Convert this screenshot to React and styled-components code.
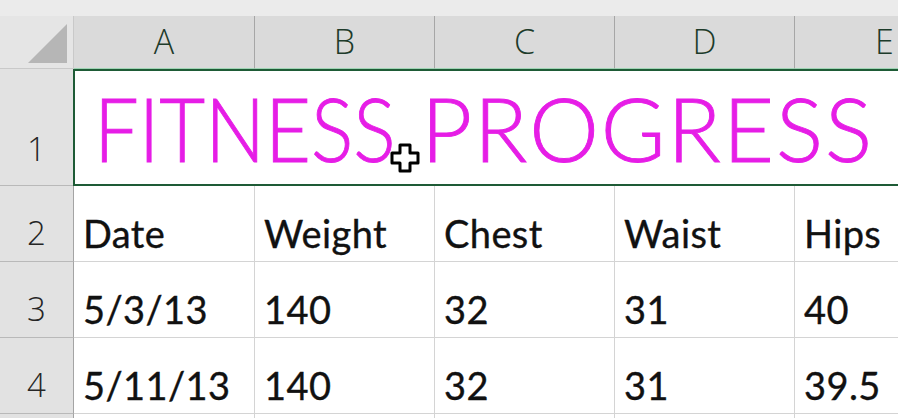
import React from "react";
import styled, { createGlobalStyle } from "styled-components";

const Global = createGlobalStyle`
  html, body { margin: 0; padding: 0; background: #ffffff; }
  body { width: 898px; height: 418px; overflow: hidden; }
`;

const Sheet = styled.div`
  position: relative;
  display: grid;
  grid-template-columns: 74px 181px 180px 180px 180px 180px;
  grid-template-rows: 16px 53px 117px 76px 76px 76px 20px;
  width: 898px;
  height: 418px;
  overflow: hidden;
  background: #ffffff;
`;

const TopStrip = styled.div`
  grid-column: 1 / -1;
  background: #ebebeb;
`;

const Corner = styled.div`
  background: #e5e5e5;
  border-right: 1px solid #c9c9c9;
  border-bottom: 1px solid #c9c9c9;
  display: flex;
  align-items: flex-end;
  justify-content: flex-end;
  padding: 0 6px 5px 0;
`;

const ColHead = styled.div`
  background: #dadada;
  border-right: 1px solid #a6a6a6;
  border-bottom: 1px solid #9fd4b4;
  display: flex;
  align-items: flex-end;
  justify-content: center;
  padding-bottom: 10px;
  font-family: "Open Sans", "Liberation Sans", sans-serif;
  font-weight: 300;
  font-size: 34px;
  line-height: 1;
  color: #1d3b2a;
`;

const RowHead = styled.div`
  background: #e2e2e2;
  border-right: 1px solid #a4a4a4;
  border-bottom: 1px solid #b9b9b9;
  display: flex;
  align-items: flex-end;
  justify-content: center;
  padding-bottom: ${(p) => p.$pb}px;
  font-family: "Open Sans", "Liberation Sans", sans-serif;
  font-weight: 300;
  font-size: 33px;
  line-height: 1;
  color: #262626;
`;

const TitleCell = styled.div`
  grid-column: 2 / -1;
  border: 2px solid #1e5b36;
  border-right: none;
  margin-left: -1px;
  display: flex;
  align-items: flex-end;
  padding: 0 0 12px 19px;
  overflow: hidden;
`;

const Word = styled.span`
  display: inline-block;
  font-family: "Lato", "Liberation Sans", sans-serif;
  font-weight: 300;
  font-size: 88px;
  line-height: 1;
  white-space: nowrap;
  color: #e61de6;
  -webkit-text-stroke: 0.9px #e61de6;
  letter-spacing: ${(p) => p.$ls}px;
  margin-right: ${(p) => p.$mr}px;
  transform: scaleX(${(p) => p.$sx});
  transform-origin: left bottom;
`;

const Cell = styled.div`
  border-right: 1px solid #d4d4d4;
  border-bottom: 1px solid #d4d4d4;
  display: flex;
  align-items: flex-end;
  padding: 0 0 9px 9px;
  font-family: "Lato", "Liberation Sans", sans-serif;
  font-size: 38px;
  letter-spacing: 0.4px;
  -webkit-text-stroke: 0.35px #111111;
  line-height: 1;
  color: #111111;
  white-space: nowrap;
  overflow: hidden;
`;

const Cursor = styled.svg`
  position: absolute;
  left: 390px;
  top: 143px;
  width: 30px;
  height: 30px;
`;

const cols = ["A", "B", "C", "D", "E"];
const rows = [
  ["Date", "Weight", "Chest", "Waist", "Hips"],
  ["5/3/13", "140", "32", "31", "40"],
  ["5/11/13", "140", "32", "31", "39.5"],
];

export default function App() {
  return (
    <>
      <Global />
      <Sheet>
        <TopStrip />
        <Corner>
          <svg width="39" height="39" viewBox="0 0 39 39">
            <polygon points="0,39 39,39 39,0" fill="#b6b6b6" />
          </svg>
        </Corner>
        {cols.map((c) => (
          <ColHead key={c}>{c}</ColHead>
        ))}
        <RowHead $pb={20}>1</RowHead>
        <TitleCell>
          <Word $sx={0.9} $ls={0} $mr={-8}>FITNESS</Word>
          <Word $sx={1} $ls={2} $mr={0}>PROGRESS</Word>
        </TitleCell>
        {rows.map((r, i) => (
          <React.Fragment key={i}>
            <RowHead $pb={12}>{i + 2}</RowHead>
            {r.map((v, j) => (
              <Cell key={j}>{v}</Cell>
            ))}
          </React.Fragment>
        ))}
        <RowHead $pb={0} />
        {cols.map((c) => (
          <Cell key={c} />
        ))}
        <Cursor viewBox="0 0 30 30">
          <polygon
            points="10,2 20,2 20,10 28,10 28,20 20,20 20,28 10,28 10,20 2,20 2,10 10,10"
            fill="#ffffff"
            stroke="#000000"
            strokeWidth="3"
            strokeLinejoin="round"
          />
        </Cursor>
      </Sheet>
    </>
  );
}
